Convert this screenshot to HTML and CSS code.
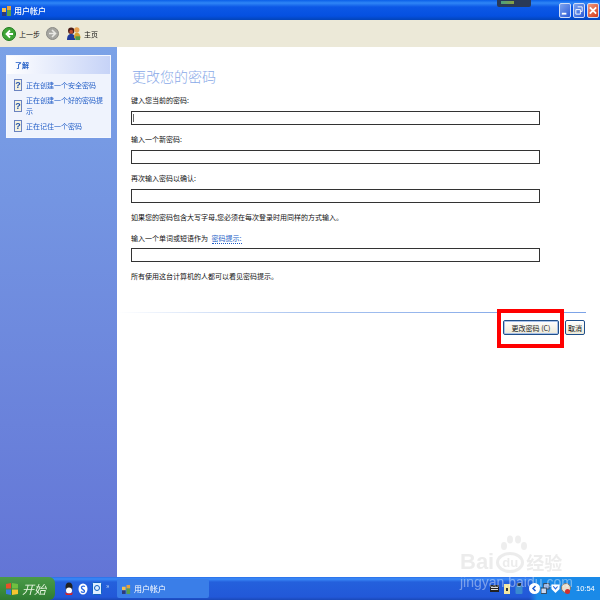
FILE: index.html
```html
<!DOCTYPE html>
<html lang="zh-CN">
<head>
<meta charset="utf-8">
<title>用户帐户</title>
<link rel="stylesheet" href="styles.css">
</head>
<body>
<div class="desktop">
  <header class="titlebar">
    <div class="title-left">
      <svg class="title-icon" width="10" height="11" viewBox="0 0 10 11"><rect x="0" y="3" width="4" height="4" fill="#f2c14e"/><rect x="5" y="1" width="4" height="4" fill="#e8a33a"/><rect x="0" y="7" width="4" height="4" fill="#2d3a7a"/><rect x="5" y="5" width="4" height="6" fill="#5aa04a"/></svg>
      <span class="title-text">用户帐户</span>
    </div>
    <div class="win-buttons">
      <span class="win-btn"><svg width="11" height="13" viewBox="0 0 11 13"><rect x="2" y="9" width="5" height="2" fill="#fff"/></svg></span>
      <span class="win-btn"><svg width="11" height="13" viewBox="0 0 11 13"><path d="M4 2.500h5v5h-2M2 5.500h5v5H2z" fill="none" stroke="#fff"/></svg></span>
      <span class="win-btn win-close"><svg width="11" height="13" viewBox="0 0 11 13"><path d="M2 3l7 7M9 3l-7 7" stroke="#fff" stroke-width="2"/></svg></span>
    </div>
    <div class="ime-widget"><span class="ime-bar"></span></div>
  </header>

  <nav class="toolbar">
    <svg width="14" height="14" viewBox="0 0 14 14"><circle cx="7" cy="7" r="6.500" fill="#3fa535" stroke="#1f7a20"/><path d="M8 3.500L4.500 7 8 10.500M4.500 7H11" fill="none" stroke="#fff" stroke-width="1.800"/></svg>
    <span class="tool-label">上一步</span>
    <svg class="tool-forward" width="13" height="13" viewBox="0 0 13 13"><circle cx="6.500" cy="6.500" r="6" fill="#a5a5a0" stroke="#8a8a86"/><path d="M6 3l3.500 3.500L6 10M9.500 6.500H3" fill="none" stroke="#e8e8e4" stroke-width="1.600"/></svg>
    <svg class="tool-home" width="14" height="15" viewBox="0 0 15 16"><circle cx="4.500" cy="5" r="3.400" fill="#4a1c18"/><circle cx="4.500" cy="6" r="2" fill="#c04a30"/><path d="M0 15c0-5 2-6.500 4.500-6.500S9 10 9 15z" fill="#1f3a9a"/><circle cx="10.500" cy="4" r="2.800" fill="#e8a050"/><path d="M7.500 13c0-4 1-6 3-6s4 2 4 6z" fill="#d9a030"/><rect x="9" y="11" width="5" height="4" fill="#4a9a4a"/></svg>
    <span class="tool-label">主页</span>
  </nav>

  <div class="main">
    <aside class="sidebar">
      <section class="panel">
        <div class="panel-head">了解</div>
        <ul class="panel-body">
          <li class="help-row"><span class="help-icon">?</span><span class="help-link">正在创建一个安全密码</span></li>
          <li class="help-row"><span class="help-icon">?</span><span class="help-link">正在创建一个好的密码提示</span></li>
          <li class="help-row"><span class="help-icon">?</span><span class="help-link">正在记住一个密码</span></li>
        </ul>
      </section>
    </aside>

    <main class="content">
      <h1 class="heading">更改您的密码</h1>
      <div class="form">
        <p class="label">键入您当前的密码:</p>
        <div class="field field-focus"><span class="caret"></span></div>
        <p class="label">输入一个新密码:</p>
        <div class="field"></div>
        <p class="label">再次输入密码以确认:</p>
        <div class="field"></div>
        <p class="label">如果您的密码包含大写字母,您必须在每次登录时用同样的方式输入。</p>
        <p class="label label-tight">输入一个单词或短语作为 <span class="hint-link">密码提示:</span></p>
        <div class="field"></div>
        <p class="label">所有使用这台计算机的人都可以看见密码提示。</p>
      </div>
      <div class="separator"></div>
      <div class="actions">
        <button class="btn btn-primary">更改密码 (C)</button>
        <button class="btn btn-small">取消</button>
      </div>
      <div class="highlight"></div>
    </main>
  </div>

  <footer class="taskbar">
    <div class="start">
      <svg width="12" height="12" viewBox="0 0 12 12"><path d="M0 1l5-1v5.500H0z" fill="#e8502a"/><path d="M6 0l6 1v4.500H6z" fill="#6fc040"/><path d="M0 6.500h5V12l-5-1z" fill="#3a7ae0"/><path d="M6 6.500h6V11l-6 1z" fill="#f5c530"/></svg>
      <span class="start-text">开始</span>
    </div>
    <div class="quick">
      <svg width="10" height="14" viewBox="0 0 10 14"><ellipse cx="5" cy="5" rx="3.500" ry="4.500" fill="#222"/><ellipse cx="5" cy="8.500" rx="3" ry="3" fill="#fff"/><path d="M1 10c2 2 6 2 8 0l-1 3H2z" fill="#e02020"/></svg>
      <svg width="10" height="12" viewBox="0 0 10 12"><ellipse cx="5" cy="6" rx="4.500" ry="5.500" fill="#fff"/><path d="M7 3.500C5 2.500 3 3.500 3.500 5S7 7 6.500 8.500 4 9.500 3 8.500" fill="none" stroke="#2a6ae0" stroke-width="1.300"/></svg>
      <svg width="10" height="13" viewBox="0 0 10 13"><rect x="0.500" y="0.500" width="9" height="12" rx="1" fill="#dff0ff" stroke="#1060c0"/><circle cx="5" cy="6" r="2.500" fill="none" stroke="#1060c0"/></svg>
      <span class="chevron">»</span>
    </div>
    <div class="task-btn">
      <svg width="9" height="10" viewBox="0 0 10 11"><rect x="0" y="3" width="4" height="4" fill="#f2c14e"/><rect x="5" y="1" width="4" height="4" fill="#e8a33a"/><rect x="0" y="7" width="4" height="4" fill="#2d3a7a"/><rect x="5" y="5" width="4" height="6" fill="#5aa04a"/></svg>
      <span>用户帐户</span>
    </div>
    <div class="tray-left">
      <svg width="9" height="7" viewBox="0 0 9 7"><rect width="9" height="7" fill="#222"/><rect x="1" y="2" width="7" height="1" fill="#ddd"/><rect x="1" y="4" width="7" height="1" fill="#ddd"/></svg>
      <svg width="6" height="10" viewBox="0 0 6 10"><rect width="6" height="10" fill="#f3e6a0"/><rect x="2" y="4" width="2" height="3" fill="#333"/></svg>
      <svg width="8" height="11" viewBox="0 0 8 11"><rect x="2" y="0" width="4" height="3" fill="#234"/><rect x="0.500" y="3" width="7" height="8" rx="1" fill="#3a8ad0"/></svg>
    </div>
    <div class="tray">
      <svg width="11" height="11" viewBox="0 0 11 11"><circle cx="5.500" cy="5.500" r="5.500" fill="#fff"/><path d="M6.500 3L4 5.500 6.500 8" fill="none" stroke="#1a5ad0" stroke-width="1.500"/></svg>
      <svg width="9" height="11" viewBox="0 0 10 11"><rect x="3" y="0" width="6" height="6" fill="#9ab8e8" stroke="#345"/><rect x="0" y="5" width="6" height="6" fill="#c8d8f0" stroke="#345"/></svg>
      <svg width="9" height="11" viewBox="0 0 10 11"><path d="M0.500 1h9v5L5 10.500 0.500 6z" fill="#fff"/><path d="M2.500 3L5 6l2.500-3" fill="none" stroke="#2a6ae0" stroke-width="1.300"/></svg>
      <svg width="10" height="12" viewBox="0 0 10 12"><circle cx="5" cy="5" r="4.500" fill="#e8e0d0" stroke="#876"/><circle cx="6.500" cy="8.500" r="2.500" fill="#d03030"/></svg>
      <span class="clock">10:54</span>
    </div>
  </footer>

  <div class="watermark">
    <svg class="wm-paw" width="28" height="18" viewBox="0 0 28 18"><ellipse cx="4" cy="11" rx="3" ry="4"/><ellipse cx="10" cy="4.500" rx="3" ry="4"/><ellipse cx="18" cy="4.500" rx="3" ry="4"/><ellipse cx="24" cy="11" rx="3" ry="4"/></svg>
    <div class="wm-logo"><span class="wm-bai">Bai</span><span class="wm-du">du</span><span class="wm-jy">经验</span></div>
    <div class="wm-url">jingyan.baidu.com</div>
  </div>
</div>
</body>
</html>
```

FILE: styles.css
```css
* { box-sizing: border-box; }
html, body { margin: 0; padding: 0; }
body { width: 600px; height: 600px; overflow: hidden; font-family: "Noto Sans CJK SC", "Liberation Sans", sans-serif; font-size: 7px; color: #111; }
p, h1, ul { margin: 0; padding: 0; }
ul { list-style: none; }

.desktop { position: relative; width: 600px; height: 600px; display: flex; flex-direction: column; filter: blur(0.3px); }

.titlebar { position: relative; height: 20px; display: flex; align-items: center; justify-content: space-between; padding: 0 1px 0 2px; background: linear-gradient(#0a5fe8 0, #2f86f6 3px, #0c58e6 7px, #0550e0 16px, #0344b8 20px); }
.title-left { display: flex; align-items: center; gap: 2px; }
.title-text { color: #fff; font-size: 8px; font-weight: 500; }
.win-buttons { display: flex; gap: 2px; }
.win-btn { width: 12px; height: 15px; display: flex; align-items: center; justify-content: center; border: 1px solid #cfdcf8; border-radius: 2px; background: linear-gradient(135deg, #7fa4ee, #2a5ad8); }
.win-close { background: linear-gradient(135deg, #ee9a80, #d63a18); }
.ime-widget { position: absolute; left: 497px; top: -2px; width: 34px; height: 9px; padding: 3px 0 0 4px; border-radius: 2px; background: #2a3a58; }
.ime-bar { display: block; width: 13px; height: 3px; background: linear-gradient(90deg, #4aa080, #8aa040); }

.toolbar { height: 27px; display: flex; align-items: center; padding-left: 2px; gap: 3px; background: #ece9d8; }
.tool-label { font-size: 7px; color: #111; }
.tool-forward { margin-left: 3px; }
.tool-home { margin-left: 5px; }

.main { flex: 1; display: flex; min-height: 0; }
.sidebar { width: 117px; padding: 8px 6px 0; background: linear-gradient(#7ba2e7, #6375d6); }
.panel { width: 105px; background: #eff3fd; border: 1px solid #f4f7ff; }
.panel-head { height: 18px; display: flex; align-items: center; padding-left: 8px; font-size: 7px; font-weight: 700; color: #215dc6; background: linear-gradient(90deg, #fff, #c6d3f7); }
.panel-body { padding: 5px 6px 5px 7px; display: flex; flex-direction: column; gap: 3.5px; }
.help-row { display: flex; align-items: center; gap: 4px; }
.help-icon { flex: none; width: 8px; height: 12px; display: flex; align-items: center; justify-content: center; font: 700 9px "Liberation Sans", sans-serif; color: #1f4fa8; background: #f4f2df; border: 1px solid #6a83c0; }
.help-link { line-height: 11px; color: #215dc6; }

.content { position: relative; flex: 1; padding: 20px 0 0 14px; background: #fff; }
.heading { height: 18px; font-size: 14px; line-height: 18px; font-weight: 300; color: #8aaae8; margin-bottom: 10px; margin-left: 1px; }
.form { width: 409px; }
.label { height: 10px; line-height: 10px; margin-bottom: 6px; }
.field { height: 14px; margin-bottom: 9px; border: 1px solid #333; background: #fff; }
.field-focus { padding: 2px 0 0 1px; }
.caret { display: block; width: 1px; height: 8px; background: #666; }
.label-tight { margin-top: 11px; margin-bottom: 5px; }
.hint-link { margin-left: 2px; color: #215dc6; border-bottom: 1px dotted #215dc6; }

.separator { height: 1px; margin: 31px 14px 0 -14px; background: linear-gradient(90deg, #fff, #a9c4f0 40%, #7ba2e7); }
.actions { display: flex; justify-content: flex-end; gap: 6px; margin: 7px 15px 0 0; }
.btn { height: 15px; padding: 0; font: inherit; color: #111; border: 1px solid #1f4f8a; border-radius: 2px; background: linear-gradient(#fff, #ece9d8); }
.btn-primary { width: 56px; box-shadow: inset 0 0 0 1px #a8c0e8; }
.btn-small { width: 20px; }
.highlight { position: absolute; left: 380px; top: 262px; width: 67px; height: 39px; border: 4px solid #f00; }

.taskbar { height: 23px; display: flex; align-items: center; background: linear-gradient(#2a6fe8 0, #3a8af8 2px, #2460dc 5px, #2258d8 20px, #1a48b8 23px); }
.start { width: 55px; height: 23px; display: flex; align-items: center; gap: 4px; padding-left: 6px; background: linear-gradient(#4a9a48, #3a8a3a 60%, #2f7a32); border-radius: 0 6px 6px 0; }
.start-text { font-size: 12px; font-style: italic; color: #e8f5e0; }
.quick { width: 62px; display: flex; align-items: center; gap: 4px; padding-left: 9px; }
.chevron { font-size: 7px; color: #cde; margin-bottom: 8px; }
.task-btn { width: 92px; height: 19px; display: flex; align-items: center; gap: 3px; padding-left: 5px; color: #fff; font-size: 8px; background: #3a7ee8; border-radius: 2px; }
.tray-left { flex: 1; display: flex; align-items: center; justify-content: flex-end; gap: 5px; padding-right: 6px; }
.tray { width: 71px; height: 23px; display: flex; align-items: center; gap: 1px; background: linear-gradient(90deg, rgba(30, 140, 235, 0), #1a8ae8 8px); }
.clock { margin-left: 4px; color: #fff; font: 7.500px "Liberation Sans", sans-serif; }

.watermark { position: absolute; left: 460px; top: 535px; width: 106px; color: rgba(170, 170, 170, 0.22); pointer-events: none; }
.wm-paw { position: absolute; left: 40px; top: 0; fill: rgba(170, 170, 170, 0.2); }
.wm-logo { display: flex; align-items: center; gap: 2px; height: 22px; margin-top: 16px; font: 700 22px "Liberation Sans", sans-serif; }
.wm-du { flex: none; width: 28px; height: 21px; display: flex; align-items: center; justify-content: center; font-size: 13px; border-radius: 50%; border: 3px solid rgba(170, 170, 170, 0.22); }
.wm-jy { font: 700 18px "Noto Sans CJK SC", sans-serif; }
.wm-url { margin-top: 1px; font: 14px "Liberation Sans", sans-serif; color: rgba(255, 255, 255, 0.4); }
```
